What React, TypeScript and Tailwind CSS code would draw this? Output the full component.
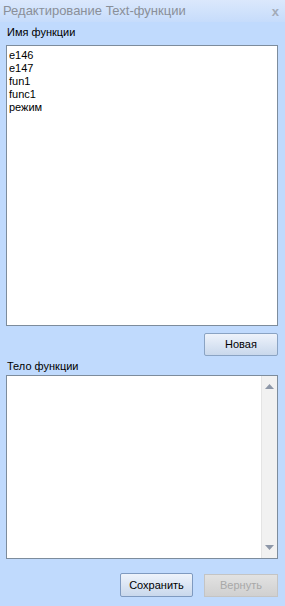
const items = ['e146', 'e147', 'fun1', 'func1', 'режим'];

function ScrollArrow({ up }: { up?: boolean }) {
  return (
    <svg width="9" height="5" viewBox="0 0 9 5">
      <path d={up ? 'M0 5 L4.5 0 L9 5 Z' : 'M0 0 L4.5 5 L9 0 Z'} fill="#8d97a8" />
    </svg>
  );
}

export default function App() {
  return (
    <div
      className="w-[285px] h-[606px] bg-[#c0dafd] flex flex-col text-[11px] text-black overflow-hidden"
      style={{ fontFamily: '"Liberation Sans", Arial, sans-serif' }}
    >
      {/* title bar */}
      <div className="h-[22px] flex items-center justify-between pl-[3px] pr-[6px] bg-gradient-to-b from-[#dbe8fc] to-[#c6dcfb]">
        <span className="text-[13px] text-[#8a8f98]">Редактирование Text-функции</span>
        <span className="text-[13px] font-bold text-[#a3abb8] leading-none">x</span>
      </div>

      <div className="flex flex-col px-[6px] pr-[7px]">
        <div className="h-[23px] flex items-end pl-[1px] pb-[5px]">Имя функции</div>
        <div className="h-[281px] bg-white border border-[#7d8c9c] pl-[2px] pt-[3px] leading-[13px]">
          {items.map((it) => (
            <div key={it}>{it}</div>
          ))}
        </div>

        <div className="flex justify-end mt-[7px]">
          <button className="w-[74px] h-[23px] rounded-[2px] border border-[#8aa3c3] bg-gradient-to-b from-[#eef3fb] to-[#c9d8ec] text-[11px]">
            Новая
          </button>
        </div>

        <div className="h-[17px] flex items-end pl-[1px] mt-[2px] pb-[1px]">Тело функции</div>
        <div className="h-[184px] bg-white border border-[#7d8c9c] flex justify-end">
          <div className="w-[16px] bg-[#f1f1f1] border-l border-[#e4e4e4] flex flex-col items-center justify-between py-[8px]">
            <ScrollArrow up />
            <ScrollArrow />
          </div>
        </div>

        <div className="flex justify-end gap-[11px] mt-[14px]">
          <button className="w-[73px] h-[24px] rounded-[2px] border border-[#7f9ac0] bg-gradient-to-b from-[#eef3fb] to-[#c9d8ec] text-[11px]">
            Сохранить
          </button>
          <button className="w-[74px] h-[23px] mt-[1px] border border-[#c4c4c4] bg-gradient-to-b from-[#e2e2e2] to-[#d0d0d0] text-[11px] text-[#a8a8a8]">
            Вернуть
          </button>
        </div>
      </div>
    </div>
  );
}
